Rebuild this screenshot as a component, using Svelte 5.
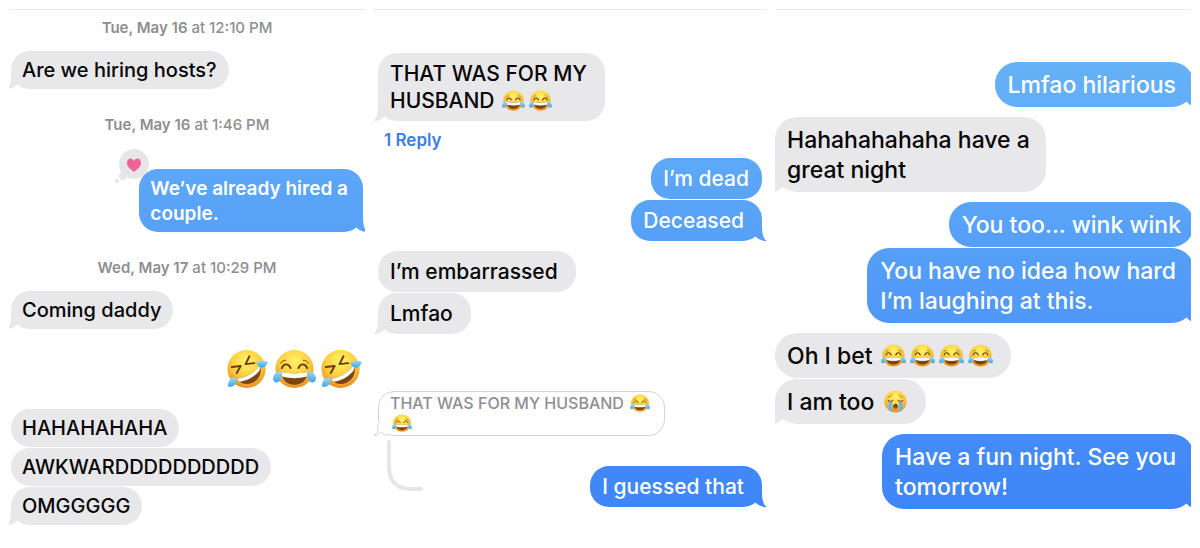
<script lang="ts">
  type Message = {
    kind: 'message';
    from: 'me' | 'them';
    lines: string[];
    tail?: boolean;
    loved?: boolean;
    space?: 'turn' | 'below-time' | 'in-thread';
  };
  type Item =
    | Message
    | { kind: 'time'; day: string; time: string }
    | { kind: 'big'; text: string }
    | { kind: 'replies'; label: string }
    | { kind: 'quote'; lines: string[] };

  const first: Item[] = [
    { kind: 'time', day: 'Tue, May 16', time: 'at 12:10 PM' },
    { kind: 'message', from: 'them', lines: ['Are we hiring hosts?'], tail: true },
    { kind: 'time', day: 'Tue, May 16', time: 'at 1:46 PM' },
    { kind: 'message', from: 'me', lines: ['We’ve already hired a', 'couple.'], tail: true, loved: true, space: 'below-time' },
    { kind: 'time', day: 'Wed, May 17', time: 'at 10:29 PM' },
    { kind: 'message', from: 'them', lines: ['Coming daddy'], tail: true },
    { kind: 'big', text: '🤣😂🤣' },
    { kind: 'message', from: 'them', lines: ['HAHAHAHAHA'] },
    { kind: 'message', from: 'them', lines: ['AWKWARDDDDDDDDDD'] },
    { kind: 'message', from: 'them', lines: ['OMGGGGG'], tail: true }
  ];

  const second: Item[] = [
    { kind: 'message', from: 'them', lines: ['THAT WAS FOR MY', 'HUSBAND 😂😂'], tail: true },
    { kind: 'replies', label: '1 Reply' },
    { kind: 'message', from: 'me', lines: ['I’m dead'] },
    { kind: 'message', from: 'me', lines: ['Deceased'], tail: true },
    { kind: 'message', from: 'them', lines: ['I’m embarrassed'], space: 'turn' },
    { kind: 'message', from: 'them', lines: ['Lmfao'], tail: true },
    { kind: 'quote', lines: ['THAT WAS FOR MY HUSBAND 😂', '😂'] },
    { kind: 'message', from: 'me', lines: ['I guessed that'], tail: true, space: 'in-thread' }
  ];

  const third: Item[] = [
    { kind: 'message', from: 'me', lines: ['Lmfao hilarious'], tail: true },
    { kind: 'message', from: 'them', lines: ['Hahahahahaha have a', 'great night'], tail: true, space: 'turn' },
    { kind: 'message', from: 'me', lines: ['You too... wink wink'], space: 'turn' },
    { kind: 'message', from: 'me', lines: ['You have no idea how hard', 'I’m laughing at this.'], tail: true },
    { kind: 'message', from: 'them', lines: ['Oh I bet 😂😂😂😂'], space: 'turn' },
    { kind: 'message', from: 'them', lines: ['I am too 😭'], tail: true },
    { kind: 'message', from: 'me', lines: ['Have a fun night. See you', 'tomorrow!'], tail: true, space: 'turn' }
  ];

  const panels = [
    { name: 'first', items: first },
    { name: 'second', items: second },
    { name: 'third', items: third }
  ];

  // keeps the emoji as parts of their own so they can be drawn as icons
  function split(text: string): string[] {
    return text.split(/(😂|🤣|😭)/u).filter((p) => p !== '');
  }
</script>

{#snippet emoji(char: string)}
  <svg class="emoji" viewBox="0 0 44 40" role="img" aria-label={char}>
    {#if char === '🤣'}
      <circle cx="21" cy="20" r="19.5" fill="url(#face)" />
      <g fill="none" stroke="#6b3d0c" stroke-width="2" stroke-linecap="round" stroke-linejoin="round">
        <path d="M6 18l9-1-4 7" />
        <path d="M24 7l-4 8 9-1" />
      </g>
      <path d="M11 30C20 29 29 24 35 16c2 8-1 15-8 18-6 3-12 1-16-4z" fill="#7a4510" />
      <path d="M11 30C20 29 29 24 35 16c0 3 0 4-1 6-5 6-12 10-20 11z" fill="#fff" />
      <path d="M31 14c4-4 8-3 12-1-2 5-7 7-10 4z" fill="url(#tear)" />
      <path d="M9 29c-5 0-7 4-7 9 5 1 9-2 9-7z" fill="url(#tear)" />
    {:else if char === '😂'}
      <circle cx="22" cy="20" r="19.5" fill="url(#face)" />
      <g fill="none" stroke="#6b3d0c" stroke-width="2" stroke-linecap="round">
        <path d="M9 19c2-5 7-5 9 0" />
        <path d="M26 19c2-5 7-5 9 0" />
        <path d="M8 14c1-2 3-3 5-3" stroke-width="1" />
        <path d="M36 14c-1-2-3-3-5-3" stroke-width="1" />
      </g>
      <path d="M9 23c8 2 18 2 26 0 0 8-5 13-13 13S9 31 9 23z" fill="#7a4510" />
      <path d="M9 23c8 2 18 2 26 0 0 2 0 3-1 5-8 2-16 2-24 0-1-2-1-3-1-5z" fill="#fff" />
      <path d="M8 22c-5 1-8 4-8 8s5 5 7 2 2-6 1-10z" fill="url(#tear)" />
      <path d="M36 22c5 1 8 4 8 8s-5 5-7 2-2-6-1-10z" fill="url(#tear)" />
    {:else}
      <circle cx="22" cy="20" r="19.5" fill="url(#face)" />
      <path d="M10 20h6v18c-3-1-5-2-6-3zM28 20h6v15c-1 1-3 2-6 3z" fill="#6bb4ea" />
      <g fill="none" stroke="#6b3d0c" stroke-width="2" stroke-linecap="round">
        <path d="M9 18c2 2 6 2 8 0" />
        <path d="M27 18c2 2 6 2 8 0" />
        <path d="M9 12c3 0 5-1 7-4" stroke-width="1" />
        <path d="M35 12c-3 0-5-1-7-4" stroke-width="1" />
      </g>
      <ellipse cx="22" cy="29" rx="4" ry="5" fill="#7a4510" />
      <path d="M19 32c1-2 5-2 6 0-1 2-5 2-6 0z" fill="#e8735a" />
    {/if}
  </svg>
{/snippet}

{#snippet rich(lines: string[])}
  {#each lines as line}
    <span class="line">{#each split(line) as part}{#if /[^\x00-\u2fff]/.test(part)}{@render emoji(part)}{:else}{part}{/if}{/each}</span>
  {/each}
{/snippet}

<svg class="defs" aria-hidden="true">
  <defs>
    <radialGradient id="face" cx="0.5" cy="0.3" r="0.7">
      <stop offset="0" stop-color="#fff26a" />
      <stop offset="0.55" stop-color="#fcd03f" />
      <stop offset="1" stop-color="#e88d22" />
    </radialGradient>
    <linearGradient id="tear" x1="0" y1="0" x2="0" y2="1">
      <stop offset="0" stop-color="#9bdcfa" />
      <stop offset="1" stop-color="#3ea4e8" />
    </linearGradient>
  </defs>
</svg>

<main class="strip">
  {#each panels as panel}
    <section class="panel {panel.name}">
      {#each panel.items as item}
        {#if item.kind === 'time'}
          <p class="time"><b>{item.day}</b> {item.time}</p>
        {:else if item.kind === 'big'}
          <p class="big">{@render rich([item.text])}</p>
        {:else if item.kind === 'replies'}
          <button class="replies">{item.label}</button>
        {:else if item.kind === 'quote'}
          <div class="quote">
            {@render rich(item.lines)}
            <svg class="quote-tail" viewBox="0 0 14 12" aria-hidden="true">
              <path d="M5 0V5L1 11L8 9L14 11V0Z" fill="#fff" />
              <path d="M5 0V4C5 7 4 10 1 11C4 12 6 10 8 8C9 10 11 11 14 11" fill="none" stroke="#d4d4d6" />
            </svg>
            <svg class="thread" viewBox="0 0 38 52" aria-hidden="true">
              <path d="M2 2V26C2 42 10 49 24 49H34" />
            </svg>
          </div>
        {:else}
          <div class="bubble {item.from} {item.space ?? ''}" class:tail={item.tail}>
            {@render rich(item.lines)}
            {#if item.loved}
              <svg class="reaction" viewBox="0 0 34 36" role="img" aria-label="Loved">
                <g fill="#e6e6e8">
                  <circle cx="19" cy="15" r="15" />
                  <circle cx="8" cy="27" r="4" />
                  <circle cx="2" cy="32" r="2" />
                </g>
                <path d="M19 23C14 19 12 17 12 14c0-5 5-6 7-2 2-4 7-3 7 2 0 3-2 5-7 9z" fill="#ec6496" />
              </svg>
            {/if}
          </div>
        {/if}
      {/each}
    </section>
  {/each}
</main>

<style>
  :global(body) { margin:0;background:#fff }
  .defs { position:absolute;width:0;height:0 }
  .strip { display:grid;grid-template-columns:356fr 394fr 416fr;gap:8px;padding:9px;font-family:Inter,"Liberation Sans",sans-serif;font-weight:500;color:#050505 }
  .panel { display:flex;flex-direction:column;align-items:flex-start;border-top:1px solid #e9e9e9;overflow:hidden;white-space:nowrap;font-size:var(--size);line-height:var(--line) }
  .first { --size:20px;--line:25px;--emoji:22px;padding:9px 2px 13px }
  .second { --size:21px;--line:27px;--emoji:23px;padding:43px 5px 30px }
  .third { --size:23px;--line:30px;--emoji:25px;padding:52px 0 30px }

  .line { display:block }
  .emoji { width:var(--emoji);height:var(--emoji);margin:0 2px;vertical-align:-4px }

  .time { align-self:center;margin:26px 0 14px;font-size:15px;line-height:18px;color:#8e8e91 }
  .time:first-child { margin-top:0 }
  .time b { font-weight:600 }

  .bubble { position:relative;isolation:isolate;padding:7px 15px 6px 11px;border-radius:19px;background:#e8e8ea;margin-bottom:1px }
  .me { align-self:flex-end;color:#fff;background:linear-gradient(#6bb8f8,#3b81f7) fixed }
  .turn { margin-top:9px }
  .below-time { margin-top:21px }
  .in-thread { margin-top:30px }
  .first .bubble { padding-right:12px }
  .first .me { padding-right:15px;font-size:19px;font-weight:600 }
  .second .bubble { padding:7px 18px 7px 12px }
  .second .me:not(.tail) { padding-right:13px }
  .third .bubble { padding:8px 16px 7px 12px;border-radius:22px }
  .third .me { margin-right:-3px;padding-right:18px;padding-left:13px }
  .third .me:not(.tail) { padding-right:13px }

  /* the little hook at the lower corner, cut from a box with the bubble's own fill */
  .tail::after { content:'';position:absolute;z-index:-1;bottom:0;left:-5px;width:20px;height:20px;background:inherit;clip-path:path('M5 0C5 10 5 17 0 20C4 20 8 19 11 16L20 8V0Z') }
  .me.tail::after { left:auto;right:-5px;clip-path:path('M15 0C15 10 15 17 20 20C16 20 12 19 9 16L0 8V0Z') }

  .reaction { position:absolute;left:-24px;top:-20px;width:34px;height:36px }

  .big { --emoji:43px;align-self:flex-end;margin:19px 0 20px }
  .big .line { display:flex }
  .big .emoji { height:40px;margin:0 0 0 4px }

  .replies { margin:9px 0 9px 6px;padding:0;border:0;background:none;font:inherit;font-size:17px;font-weight:600;line-height:18px;color:#3b7de8;cursor:pointer }

  .quote { --emoji:20px;position:relative;margin-top:56px;padding:1px 12px 2px 11px;border:1px solid #d4d4d6;border-radius:16px;font-size:16px;line-height:20px;color:#8e8e93 }
  .quote-tail { position:absolute;left:-6px;bottom:-1px;width:14px;height:12px }
  .thread { position:absolute;left:8px;top:48px;width:38px;height:52px;fill:none;stroke:#e6e6e8;stroke-width:4;stroke-linecap:round }
</style>
